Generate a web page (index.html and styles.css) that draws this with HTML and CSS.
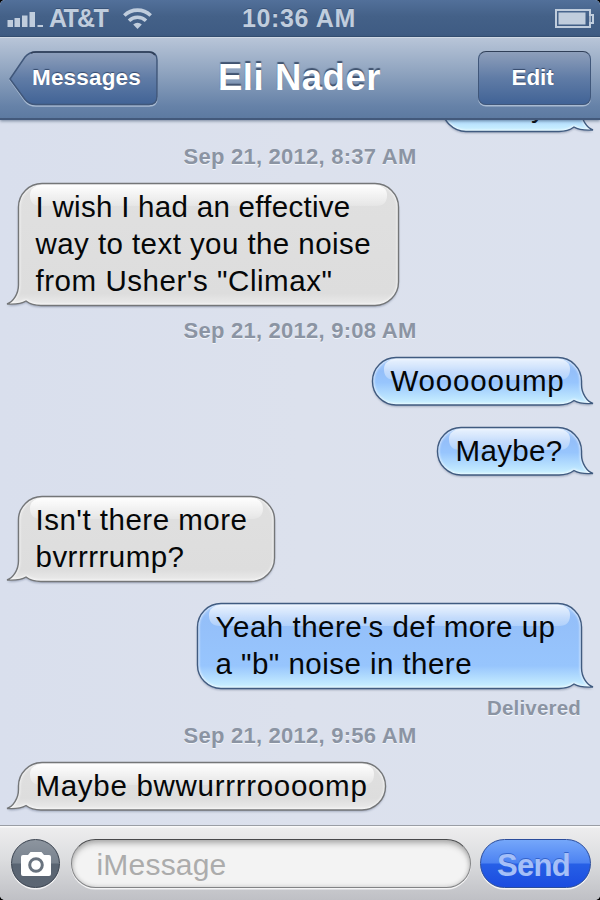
FILE: index.html
```html
<!DOCTYPE html>
<html lang="en">
<head>
<meta charset="utf-8">
<title>Eli Nader</title>
<link rel="stylesheet" href="styles.css">
</head>
<body>
<div class="phone">
  <header class="status">
    <svg class="signal" width="38" height="20" viewBox="0 0 38 20"><path d="M.5 8h5.500v7H.5zM7.500 6h5.500v9H7.500zM15 3.500h5.500V15H15zM22.500 0H28v15h-5.500zM30.500 13H36v2h-5.500z"/></svg>
    <span class="carrier" data-w="58">AT&amp;T</span>
    <svg class="wifi" width="31" height="24" viewBox="0 0 31 24"><g fill="none" stroke-width="3.600"><path d="M2.300 9.500a19 19 0 0 1 26.400 0"/><path d="M7 14.700a12.300 12.300 0 0 1 17 0"/></g><path d="M15.500 23l-4.300-4.600a6.400 6.400 0 0 1 8.600 0z"/></svg>
    <span class="clock" data-w="114">10:36 AM</span>
    <svg class="battery" width="40" height="20" viewBox="0 0 40 20"><path d="M1 1h34v5h3v8h-3v4H1z" fill="none" stroke-width="2"/><path d="M35 6v8" stroke-width="1.500"/><path d="M3.500 3.500h27v12h-27z"/></svg>
  </header>
  <nav class="nav">
    <button class="back">
      <svg width="150" height="58" viewBox="0 0 150 58">
        <defs><linearGradient id="btn" x1="0" y1="0" x2="0" y2="1"><stop offset="0" stop-color="#8e9fbb"/><stop offset=".5" stop-color="#607ca6"/><stop offset="1" stop-color="#416396"/></linearGradient></defs>
        <path d="M1 29L16 7Q20 2 27 2H140Q148 2 148 10V47Q148 55 140 55H27Q20 55 16 50Z" fill="none" stroke="#a9bbd2" stroke-width="1.400"/>
        <path d="M1 28L16 6Q20 1 27 1H140Q148 1 148 9V45.500Q148 53.500 140 53.500H27Q20 53.500 16 48.500Z" fill="url(#btn)" stroke="#40577a" stroke-width="1.500"/>
        <path d="M22 2Q24 1 27 1H140Q144 1 146 4" fill="none" stroke="#303f58" stroke-width="1.600"/>
      </svg>
      <span data-w="109">Messages</span>
    </button>
    <h1 data-w="163">Eli Nader</h1>
    <button class="edit"><span data-w="42">Edit</span></button>
  </nav>
  <main class="feed">
    <div class="bubble out clipped"><p>y</p></div>
    <time><span data-w="233">Sep 21, 2012, 8:37 AM</span></time>
    <div class="bubble in climax"><p><span data-w="315">I wish I had an effective</span><span data-w="335.500">way to text you the noise</span><span data-w="297">from Usher's "Climax"</span></p></div>
    <time class="second"><span data-w="233">Sep 21, 2012, 9:08 AM</span></time>
    <div class="bubble out woump"><p><span data-w="174">Woooooump</span></p></div>
    <div class="bubble out maybe"><p><span data-w="107">Maybe?</span></p></div>
    <div class="bubble in isnt"><p><span data-w="212">Isn't there more</span><span data-w="149">bvrrrrump?</span></p></div>
    <div class="bubble out yeah"><p><span data-w="340">Yeah there's def more up</span><span data-w="256.500">a "b" noise in there</span></p></div>
    <div class="receipt"><span data-w="94">Delivered</span></div>
    <time class="third"><span data-w="233">Sep 21, 2012, 9:56 AM</span></time>
    <div class="bubble in bwwurr"><p><span data-w="332">Maybe bwwurrrroooomp</span></p></div>
  </main>
  <footer class="composer">
    <button class="camera">
      <svg width="32" height="28" viewBox="0 0 32 28"><path d="M3 5H8L10.500 2H21.500L24 5H29Q31 5 31 7V24Q31 26 29 26H3Q1 26 1 24V7Q1 5 3 5Z" fill="#fff"/><circle cx="16" cy="15" r="6.300" fill="#fff" stroke="#69737f" stroke-width="3"/></svg>
    </button>
    <div class="field"><span data-w="130">iMessage</span></div>
    <button class="send"><span data-w="73">Send</span></button>
  </footer>
</div>
<script src="bubbles.js"></script>
</body>
</html>
```
FILE: styles.css
```css
* { box-sizing: border-box; }
body { margin: 0; background: #000; font-family: "Liberation Sans", Arial, sans-serif; }
button { border: 0; padding: 0; background: none; font: inherit; }
[data-w] { white-space: nowrap; }
.phone { width: 600px; height: 900px; border-radius: 5px; overflow: hidden; display: flex; flex-direction: column; background: #dbe0ed; }

.status { height: 37px; flex: none; display: grid; grid-template-columns: 42px 72px 126px 1fr 46px; align-items: center; padding-left: 7px; color: #c0cddd; fill: #c0cddd; stroke: none; background: linear-gradient(#52709a, #446188 45%, #3e5b83); border-bottom: 1px solid #344e72; font-weight: bold; font-size: 25px; line-height: 37px; }
.status span { text-shadow: 0 -1px #395377; }
.signal { margin-top: 7px; }
.wifi { margin-top: -1px; margin-left: 1px; stroke: none; }
.wifi g, .battery path:first-child, .battery path:nth-child(2) { stroke: #c0cddd; }
.clock { margin-left: -5px; }
.battery { margin-left: 1px; }

.nav { height: 83px; flex: none; display: grid; grid-template-columns: 149px 1fr 112px; padding: 12.500px 9px 0; position: relative; z-index: 2; color: #fff; font-weight: bold; background: linear-gradient(#b8c5d8, #8da2be 45%, #6682a8 85%, #5d7aa1); border-top: 1.500px solid #d0d9e5; border-bottom: 2px solid #43597b; box-shadow: 0 1px 3px rgba(50,70,100,.6); text-shadow: 0 -2px 1px #40536f; }
.nav h1 { margin: 0; font-size: 36.500px; line-height: 54px; padding-left: 60px; }
.nav button { height: 54px; color: #fff; font-size: 22.500px; text-shadow: 0 -1.500px 1px #34496b; line-height: 52px; }
.back { display: grid; text-align: left; }
.back > * { grid-area: 1 / 1; }
.back span { padding-left: 23px; line-height: 54px; }
.edit { border: 1.500px solid #40577a !important; border-top-color: #303f58 !important; border-radius: 8px; background: linear-gradient(#8e9fbb, #607ca6 50%, #416396) !important; box-shadow: 0 1.500px #a9bbd2; margin-left: -1px; }
.edit span { margin-right: 4px; }

.feed { flex: 1; min-height: 0; overflow: hidden; display: flex; flex-direction: column; background: linear-gradient(90deg, #d9dfed, #dce1ed 50%, #dbe1ee); }
.bubble { flex: none; position: relative; font-size: 29.500px; line-height: 37.400px; color: #050708; }
.bubble p { position: relative; margin: 0; padding: 5px 0 0 17.500px; }
.bubble p span { display: block; width: max-content; }
.bubble svg { position: absolute; left: -14px; top: -4px; overflow: visible; }
.in { margin-left: 18px; }
.out { margin-right: 18px; align-self: flex-end; }
.out p { padding-left: 18.500px; }
.clipped { width: 140px; height: 49px; margin-top: -37.500px; }
.clipped p { padding-left: 89px; }
.climax { width: 381px; height: 123px; margin-top: 14px; }
.climax p { padding-top: 4.500px; }
.woump { width: 210px; height: 48.500px; margin-top: 14px; }
.maybe { width: 145px; height: 48.500px; margin-top: 21px; }
.maybe p, .isnt p, .yeah p, .bwwurr p { padding-top: 5.500px; }
.isnt { width: 257px; height: 86px; margin-top: 20.500px; }
.yeah { width: 385px; height: 86px; margin-top: 21px; }
.bwwurr { width: 368px; height: 48.500px; margin-top: 14px; }
time, .receipt { flex: none; height: 24px; line-height: 24px; font-size: 22px; font-weight: bold; color: #8b94a3; text-shadow: 0 1px #f3f6fb; text-align: center; }
time { margin-top: 13.500px; }
.second { margin-top: 13px; }
.receipt { margin: 7px 19px 0; text-align: right; font-size: 20.500px; }
.third { margin-top: 4px; }

.composer { height: 75px; flex: none; display: grid; grid-template-columns: 49px 400px 111px; column-gap: 11px; padding: 13px 11px; border-top: 1.500px solid #9a9ea5; box-shadow: inset 0 1.500px #fafafa; background: linear-gradient(#eeeeef, #dcdddf 45%, #bfc0c5); }
.composer > * { height: 49px; }
.camera { border: 1.500px solid #39424f !important; border-radius: 50%; background: linear-gradient(#8d959f, #78828e 48%, #596472 52%, #5c6673) !important; box-shadow: 0 1.500px #f3f3f4; display: grid; place-items: center; }
.field { border-radius: 25px; border: 1.500px solid #828385; border-top-color: #48494b; background: #f3f3f3; box-shadow: inset 0 5px 6px -2px #a9a9a9, inset 0 0 4px #bbb, 0 1.500px #f4f4f5; color: #acacac; font-size: 30px; line-height: 49px; padding-left: 24.500px; }
.send { border: 1.500px solid #2b4d9c !important; border-radius: 25px; background: linear-gradient(#75a7fa, #4d83f2 48%, #265fe6 52%, #1b4ce0) !important; box-shadow: 0 1.500px #f4f4f5; color: #a5bff8; font-weight: bold !important; font-size: 31px !important; line-height: 47px; text-shadow: 0 -1px #3465cd; margin: 0 2px 0 -2px; padding: 2px 4px 0 0 !important; }
```
FILE: bubbles.js
```js
// Track each line of text to its intended measure.
document.querySelectorAll('[data-w]').forEach(el => {
  const range = document.createRange();
  range.selectNodeContents(el);
  const natural = range.getBoundingClientRect().width;
  el.style.letterSpacing = (el.dataset.w - natural) / el.textContent.length + 'px';
});

// Draw a glossy balloon with a curled tail behind each message.
document.querySelectorAll('.bubble').forEach((el, i) => {
  const w = el.offsetWidth, h = el.getBoundingClientRect().height;
  const out = el.classList.contains('out');
  const r = 24;
  const body = `M${r} .5H${w - r}A${r - .5} ${r - .5} 0 0 1 ${w - .5} ${r}V${h - 21}
    C${w - .5} ${h - 12} ${w + 5} ${h - 4} ${w + 11} ${h - 2}
    C${w + 3} ${h - 1.5} ${w - 4} ${h - 2.5} ${w - 8} ${h - 5}
    C${w - 12} ${h - 2} ${w - 17} ${h - .5} ${w - 23} ${h - .5}
    H${r}A${r - .5} ${r - .5} 0 0 1 .5 ${h - r}V${r}A${r - .5} ${r - .5} 0 0 1 ${r} .5Z`;
  const fill = out
    ? `<stop offset="0" stop-color="#a9cdfb"/><stop offset="${14 / h}" stop-color="#94bff9"/><stop offset="${1 - 23 / h}" stop-color="#97c5fd"/><stop offset="1" stop-color="#cdf3ff"/>`
    : `<stop offset="0" stop-color="#e0e0e0"/><stop offset="${1 - 12 / h}" stop-color="#dddddd"/><stop offset="1" stop-color="#ececec"/>`;
  const line = out ? '#405b80' : '#747678';
  const flip = out ? '' : `translate(${w} 0) scale(-1 1)`;
  el.insertAdjacentHTML('afterbegin', `<svg width="${w + 28}" height="${h + 8}">
    <defs>
      <linearGradient id="f${i}" x1="0" y1="0" x2="0" y2="1">${fill}</linearGradient>
      <linearGradient id="g${i}" x1="0" y1="0" x2="0" y2="1"><stop offset="0" stop-color="#fff" stop-opacity="${out ? .75 : 1}"/><stop offset="1" stop-color="#fff" stop-opacity="${out ? .27 : .2}"/></linearGradient>
      <clipPath id="c${i}"><path d="${body}"/></clipPath>
      <filter id="b${i}" x="-5%" y="-10%" width="110%" height="125%"><feGaussianBlur stdDeviation="1.300"/></filter>
      <filter id="s${i}" x="-5%" y="-10%" width="110%" height="125%"><feGaussianBlur stdDeviation=".6"/></filter>
    </defs>
    <g transform="translate(14 4) ${flip}">
      <path d="${body}" transform="translate(0 1.500)" fill="#64708a" opacity=".55" filter="url(#b${i})"/>
      <path d="${body}" fill="url(#f${i})"/>
      <path d="${body}" clip-path="url(#c${i})" fill="none" stroke="#fff" stroke-opacity=".75" stroke-width="3" filter="url(#b${i})"/>
      <path d="M25 1.500H${w - 25}Q${w - 12} 3 ${w - 12} 12Q${w - 12} 23 ${w - 23} 23H23Q12 23 12 12Q12 3 25 1.500Z" fill="url(#g${i})" filter="url(#s${i})"/>
      <path d="${body}" fill="none" stroke="${line}" stroke-width="1.400"/>
    </g></svg>`);
});
```
